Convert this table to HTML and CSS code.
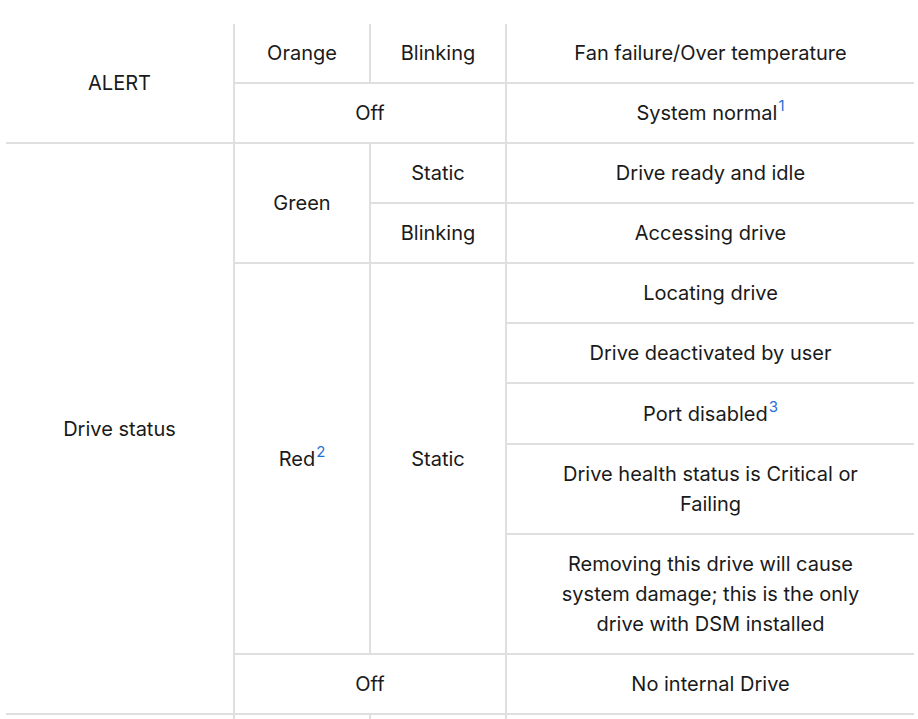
FILE: index.html
```html
<!DOCTYPE html>
<html>
<head>
<meta charset="utf-8">
<link rel="stylesheet" href="styles.css">
</head>
<body>
<div class="wrap">
<table class="led">
  <colgroup>
    <col class="c1"><col class="c2"><col class="c3"><col class="c4">
  </colgroup>
  <tbody>
    <tr class="first">
      <td rowspan="2" class="lead">ALERT</td>
      <td>Orange</td>
      <td>Blinking</td>
      <td class="desc">Fan failure/Over temperature</td>
    </tr>
    <tr>
      <td colspan="2">Off</td>
      <td class="desc">System normal<sup>1</sup></td>
    </tr>
    <tr>
      <td rowspan="8" class="lead">Drive status</td>
      <td rowspan="2">Green</td>
      <td>Static</td>
      <td class="desc">Drive ready and idle</td>
    </tr>
    <tr>
      <td>Blinking</td>
      <td class="desc">Accessing drive</td>
    </tr>
    <tr>
      <td rowspan="5">Red<sup>2</sup></td>
      <td rowspan="5">Static</td>
      <td class="desc">Locating drive</td>
    </tr>
    <tr>
      <td class="desc">Drive deactivated by user</td>
    </tr>
    <tr>
      <td class="desc tall">Port disabled<sup>3</sup></td>
    </tr>
    <tr>
      <td class="desc">Drive health status is Critical or Failing</td>
    </tr>
    <tr>
      <td class="desc">Removing this drive will cause system damage; this is the only drive with DSM installed</td>
    </tr>
    <tr>
      <td colspan="2">Off</td>
      <td class="desc">No internal Drive</td>
    </tr>
    <tr>
      <td class="lead">&nbsp;</td>
      <td>&nbsp;</td>
      <td>&nbsp;</td>
      <td class="desc">&nbsp;</td>
    </tr>
  </tbody>
</table>
</div>
</body>
</html>
```
FILE: styles.css
```css
html, body {
  margin: 0;
  padding: 0;
  background: #ffffff;
}
.wrap {
  padding: 24px 0 0 6px;
}
.led {
  border-collapse: collapse;
  table-layout: fixed;
  width: 908px;
  font-family: Inter, "Noto Sans", sans-serif;
  font-size: 20px;
  line-height: 30px;
  color: #1a1a1a;
}
.c1 { width: 228px; }
.c2 { width: 136px; }
.c3 { width: 136px; }
.c4 { width: 408px; }
.led td {
  border: 2px solid #dedfe0;
  padding: 14px 8px;
  text-align: center;
  vertical-align: middle;
}
.led tr.first td {
  border-top: none;
}
.led td.lead {
  border-left: none;
}
.led td.desc {
  border-right: none;
  padding: 14px 46px;
}
.led td.desc.tall {
  padding: 15px 46px 14px;
}
.led sup {
  font-size: 15px;
  line-height: 0;
  vertical-align: 9px;
  color: #1f6fd6;
  margin-left: 1px;
}
```
